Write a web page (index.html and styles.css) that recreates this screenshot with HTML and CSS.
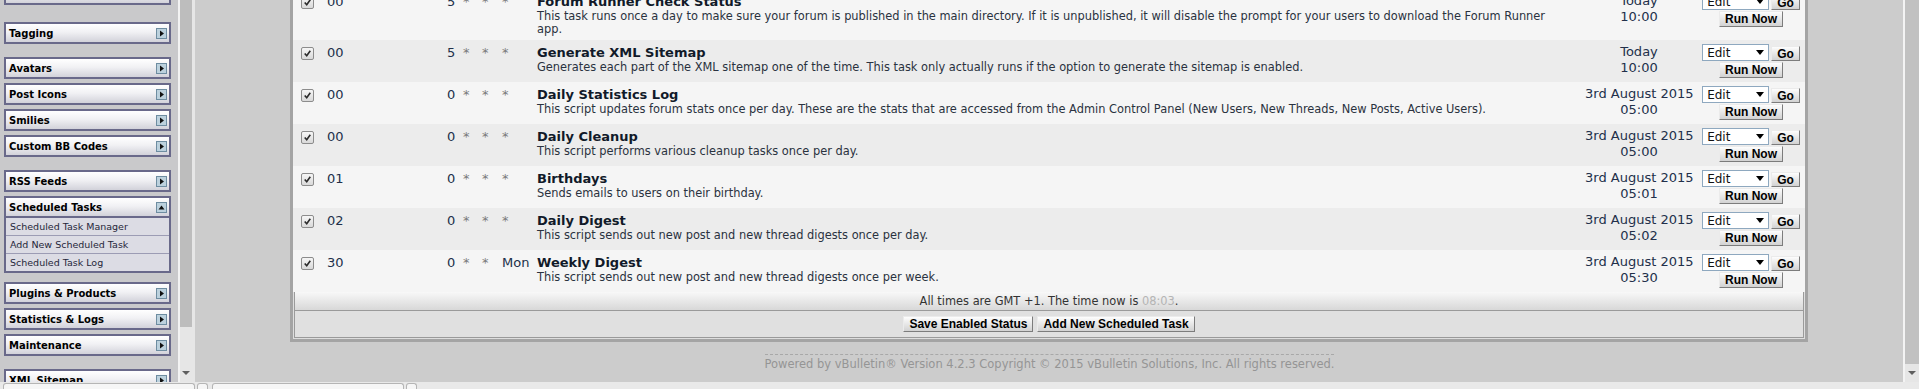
FILE: index.html
```html
<!DOCTYPE html>
<html lang="en">

<head>
    <meta charset="UTF-8">
    <meta name="viewport" content="width=device-width, initial-scale=1.0">
    <title>Scheduled Task Manager</title>
    <link rel="stylesheet" href="styles.css">
</head>

<body>
    <div class="screen">
        <div class="frames">
            <!-- menu da esquerda -->
            <aside class="side">
                <div class="navgroup navgroup--top">
                    <div class="navbox">
                        <div class="navhead">Paid Subscriptions
                            <svg class="tog" viewBox="0 0 11 11"><rect x="0.5" y="0.5" width="10" height="10" /><polygon points="4,2.5 8,5.5 4,8.5" /></svg>
                        </div>
                    </div>
                </div>
                <div class="navgroup">
                    <div class="navbox">
                        <div class="navhead">Tagging
                            <svg class="tog" viewBox="0 0 11 11"><rect x="0.5" y="0.5" width="10" height="10" /><polygon points="4,2.5 8,5.5 4,8.5" /></svg>
                        </div>
                    </div>
                </div>
                <div class="navgroup">
                    <div class="navbox">
                        <div class="navhead">Avatars
                            <svg class="tog" viewBox="0 0 11 11"><rect x="0.5" y="0.5" width="10" height="10" /><polygon points="4,2.5 8,5.5 4,8.5" /></svg>
                        </div>
                    </div>
                    <div class="navbox">
                        <div class="navhead">Post Icons
                            <svg class="tog" viewBox="0 0 11 11"><rect x="0.5" y="0.5" width="10" height="10" /><polygon points="4,2.5 8,5.5 4,8.5" /></svg>
                        </div>
                    </div>
                    <div class="navbox">
                        <div class="navhead">Smilies
                            <svg class="tog" viewBox="0 0 11 11"><rect x="0.5" y="0.5" width="10" height="10" /><polygon points="4,2.5 8,5.5 4,8.5" /></svg>
                        </div>
                    </div>
                    <div class="navbox">
                        <div class="navhead">Custom BB Codes
                            <svg class="tog" viewBox="0 0 11 11"><rect x="0.5" y="0.5" width="10" height="10" /><polygon points="4,2.5 8,5.5 4,8.5" /></svg>
                        </div>
                    </div>
                </div>
                <div class="navgroup navgroup--tight">
                    <div class="navbox">
                        <div class="navhead">RSS Feeds
                            <svg class="tog" viewBox="0 0 11 11"><rect x="0.5" y="0.5" width="10" height="10" /><polygon points="4,2.5 8,5.5 4,8.5" /></svg>
                        </div>
                    </div>
                    <div class="navbox">
                        <div class="navhead navhead--open">Scheduled Tasks
                            <svg class="tog" viewBox="0 0 11 11"><rect x="0.5" y="0.5" width="10" height="10" /><polygon points="2.5,7.5 5.5,3.5 8.5,7.5" /></svg>
                        </div>
                        <a class="navlink" href="#">Scheduled Task Manager</a>
                        <a class="navlink" href="#">Add New Scheduled Task</a>
                        <a class="navlink" href="#">Scheduled Task Log</a>
                    </div>
                </div>
                <div class="navgroup">
                    <div class="navbox">
                        <div class="navhead">Plugins &amp; Products
                            <svg class="tog" viewBox="0 0 11 11"><rect x="0.5" y="0.5" width="10" height="10" /><polygon points="4,2.5 8,5.5 4,8.5" /></svg>
                        </div>
                    </div>
                    <div class="navbox">
                        <div class="navhead">Statistics &amp; Logs
                            <svg class="tog" viewBox="0 0 11 11"><rect x="0.5" y="0.5" width="10" height="10" /><polygon points="4,2.5 8,5.5 4,8.5" /></svg>
                        </div>
                    </div>
                    <div class="navbox">
                        <div class="navhead">Maintenance
                            <svg class="tog" viewBox="0 0 11 11"><rect x="0.5" y="0.5" width="10" height="10" /><polygon points="4,2.5 8,5.5 4,8.5" /></svg>
                        </div>
                    </div>
                </div>
                <div class="navgroup">
                    <div class="navbox">
                        <div class="navhead">XML Sitemap
                            <svg class="tog" viewBox="0 0 11 11"><rect x="0.5" y="0.5" width="10" height="10" /><polygon points="4,2.5 8,5.5 4,8.5" /></svg>
                        </div>
                    </div>
                </div>
            </aside>
            <div class="vscroll vscroll--side">
                <div class="thumb"></div>
                <div class="track"><span class="arrow"></span></div>
            </div>

            <!-- area principal -->
            <main class="main">
                <div class="tborder">
                    <table class="tasks">
                        <colgroup>
                            <col style="width:29px">
                            <col style="width:121px">
                            <col style="width:16px">
                            <col style="width:19px">
                            <col style="width:20px">
                            <col style="width:35px">
                            <col>
                            <col style="width:116px">
                            <col style="width:108px">
                        </colgroup>
                        <tr class="row">
                            <td class="c-chk"><span class="chk"><svg viewBox="0 0 13 13"><path d="M3.2 6.4l2.4 2.8 4.2-6" /></svg></span></td>
                            <td class="c-min">00</td>
                            <td class="c-num">5</td>
                            <td class="c-num star">*</td>
                            <td class="c-num star">*</td>
                            <td class="c-num star">*</td>
                            <td class="c-task">
                                <div class="title">Forum Runner Check Status</div>
                                <div class="desc">This task runs once a day to make sure your forum is published in the main directory. If it is unpublished, it will disable the prompt for your users to download the Forum Runner app.</div>
                            </td>
                            <td class="c-next">Today<br>10:00</td>
                            <td class="c-ctl">
                                <div class="ctl-top">
                                    <span class="pick"><select><option>Edit</option></select></span>
                                    <button class="btn btn--go">Go</button>
                                </div>
                                <button class="btn btn--run">Run Now</button>
                            </td>
                        </tr>
                        <tr class="row row--alt">
                            <td class="c-chk"><span class="chk"><svg viewBox="0 0 13 13"><path d="M3.2 6.4l2.4 2.8 4.2-6" /></svg></span></td>
                            <td class="c-min">00</td>
                            <td class="c-num">5</td>
                            <td class="c-num star">*</td>
                            <td class="c-num star">*</td>
                            <td class="c-num star">*</td>
                            <td class="c-task">
                                <div class="title">Generate XML Sitemap</div>
                                <div class="desc">Generates each part of the XML sitemap one of the time. This task only actually runs if the option to generate the sitemap is enabled.</div>
                            </td>
                            <td class="c-next">Today<br>10:00</td>
                            <td class="c-ctl">
                                <div class="ctl-top">
                                    <span class="pick"><select><option>Edit</option></select></span>
                                    <button class="btn btn--go">Go</button>
                                </div>
                                <button class="btn btn--run">Run Now</button>
                            </td>
                        </tr>
                        <tr class="row">
                            <td class="c-chk"><span class="chk"><svg viewBox="0 0 13 13"><path d="M3.2 6.4l2.4 2.8 4.2-6" /></svg></span></td>
                            <td class="c-min">00</td>
                            <td class="c-num">0</td>
                            <td class="c-num star">*</td>
                            <td class="c-num star">*</td>
                            <td class="c-num star">*</td>
                            <td class="c-task">
                                <div class="title">Daily Statistics Log</div>
                                <div class="desc">This script updates forum stats once per day. These are the stats that are accessed from the Admin Control Panel (New Users, New Threads, New Posts, Active Users).</div>
                            </td>
                            <td class="c-next">3rd August 2015<br>05:00</td>
                            <td class="c-ctl">
                                <div class="ctl-top">
                                    <span class="pick"><select><option>Edit</option></select></span>
                                    <button class="btn btn--go">Go</button>
                                </div>
                                <button class="btn btn--run">Run Now</button>
                            </td>
                        </tr>
                        <tr class="row row--alt">
                            <td class="c-chk"><span class="chk"><svg viewBox="0 0 13 13"><path d="M3.2 6.4l2.4 2.8 4.2-6" /></svg></span></td>
                            <td class="c-min">00</td>
                            <td class="c-num">0</td>
                            <td class="c-num star">*</td>
                            <td class="c-num star">*</td>
                            <td class="c-num star">*</td>
                            <td class="c-task">
                                <div class="title">Daily Cleanup</div>
                                <div class="desc">This script performs various cleanup tasks once per day.</div>
                            </td>
                            <td class="c-next">3rd August 2015<br>05:00</td>
                            <td class="c-ctl">
                                <div class="ctl-top">
                                    <span class="pick"><select><option>Edit</option></select></span>
                                    <button class="btn btn--go">Go</button>
                                </div>
                                <button class="btn btn--run">Run Now</button>
                            </td>
                        </tr>
                        <tr class="row">
                            <td class="c-chk"><span class="chk"><svg viewBox="0 0 13 13"><path d="M3.2 6.4l2.4 2.8 4.2-6" /></svg></span></td>
                            <td class="c-min">01</td>
                            <td class="c-num">0</td>
                            <td class="c-num star">*</td>
                            <td class="c-num star">*</td>
                            <td class="c-num star">*</td>
                            <td class="c-task">
                                <div class="title">Birthdays</div>
                                <div class="desc">Sends emails to users on their birthday.</div>
                            </td>
                            <td class="c-next">3rd August 2015<br>05:01</td>
                            <td class="c-ctl">
                                <div class="ctl-top">
                                    <span class="pick"><select><option>Edit</option></select></span>
                                    <button class="btn btn--go">Go</button>
                                </div>
                                <button class="btn btn--run">Run Now</button>
                            </td>
                        </tr>
                        <tr class="row row--alt">
                            <td class="c-chk"><span class="chk"><svg viewBox="0 0 13 13"><path d="M3.2 6.4l2.4 2.8 4.2-6" /></svg></span></td>
                            <td class="c-min">02</td>
                            <td class="c-num">0</td>
                            <td class="c-num star">*</td>
                            <td class="c-num star">*</td>
                            <td class="c-num star">*</td>
                            <td class="c-task">
                                <div class="title">Daily Digest</div>
                                <div class="desc">This script sends out new post and new thread digests once per day.</div>
                            </td>
                            <td class="c-next">3rd August 2015<br>05:02</td>
                            <td class="c-ctl">
                                <div class="ctl-top">
                                    <span class="pick"><select><option>Edit</option></select></span>
                                    <button class="btn btn--go">Go</button>
                                </div>
                                <button class="btn btn--run">Run Now</button>
                            </td>
                        </tr>
                        <tr class="row">
                            <td class="c-chk"><span class="chk"><svg viewBox="0 0 13 13"><path d="M3.2 6.4l2.4 2.8 4.2-6" /></svg></span></td>
                            <td class="c-min">30</td>
                            <td class="c-num">0</td>
                            <td class="c-num star">*</td>
                            <td class="c-num star">*</td>
                            <td class="c-num">Mon</td>
                            <td class="c-task">
                                <div class="title">Weekly Digest</div>
                                <div class="desc">This script sends out new post and new thread digests once per week.</div>
                            </td>
                            <td class="c-next">3rd August 2015<br>05:30</td>
                            <td class="c-ctl">
                                <div class="ctl-top">
                                    <span class="pick"><select><option>Edit</option></select></span>
                                    <button class="btn btn--go">Go</button>
                                </div>
                                <button class="btn btn--run">Run Now</button>
                            </td>
                        </tr>
                    </table>
                    <div class="tfoot">
                        <div class="tfoot-time">All times are GMT +1. The time now is <span class="now">08:03</span>.</div>
                        <div class="tfoot-btns">
                            <button class="btn">Save Enabled Status</button>
                            <button class="btn">Add New Scheduled Task</button>
                        </div>
                    </div>
                </div>
                <div class="copyright">Powered by vBulletin&reg; Version 4.2.3 Copyright &copy; 2015 vBulletin Solutions, Inc. All rights reserved.</div>
            </main>
            <div class="vscroll vscroll--main">
                <div class="thumb"></div>
                <div class="track"><span class="arrow"></span></div>
            </div>
        </div>
        <div class="hbar">
            <span class="tab tab--wide"></span>
            <span class="tab tab--small"></span>
            <span class="tab tab--wide tab--next"></span>
            <span class="tab tab--small"></span>
        </div>
    </div>
</body>

</html>
```

FILE: styles.css
```css
body {
    margin: 0;
    font-family: "DejaVu Sans", Verdana, sans-serif;
    background: #cccccc;
    overflow: hidden;
}

.screen {
    height: 389px;
    display: flex;
    flex-direction: column;
}

.frames {
    display: flex;
    height: 382px;
    overflow: hidden;
}

/* menu da esquerda */
.side {
    width: 178px;
    flex: none;
    box-sizing: border-box;
    padding-left: 4px;
    background: #c9c9cb;
    overflow: hidden;
}

.navgroup {
    display: flow-root;
    margin-bottom: 9px;
}

.navgroup--top {
    margin-top: -17px;
    margin-bottom: 13px;
}

.navgroup--tight {
    margin-bottom: 5px;
}

.navbox {
    width: 167px;
    box-sizing: border-box;
    border: 2px solid #69698a;
    margin-bottom: 4px;
    background: #dcdce4;
}

.navhead {
    display: flex;
    align-items: center;
    justify-content: space-between;
    height: 18px;
    padding: 0 2px 0 3px;
    font-size: 10px;
    font-weight: bold;
    color: #000;
    background: linear-gradient(#ffffff, #f1f1f4 45%, #d2d2da);
}

.navhead--open {
    border-bottom: 2px solid #69698a;
}

.tog {
    width: 11px;
    height: 11px;
    flex: none;
}

.tog rect {
    fill: #bcd1dd;
    stroke: #6e8da1;
}

.tog polygon {
    fill: #111;
}

.navlink {
    display: block;
    height: 17px;
    line-height: 17px;
    padding-left: 4px;
    font-size: 9.5px;
    color: #26263a;
    text-decoration: none;
}

.navlink + .navlink {
    border-top: 1px solid #9c9cb4;
}

/* barras de rolagem */
.vscroll {
    flex: none;
    display: flex;
    flex-direction: column;
    background: #e6e6e6;
    border-left: 2px solid #f3f3f3;
}

.vscroll--side {
    width: 15px;
}

.vscroll--side .thumb {
    height: 327px;
    width: 12px;
    background: #bdbdbd;
}

.vscroll--main {
    width: 14px;
}

.vscroll--main .thumb {
    height: 364px;
    background: #c1c1c1;
}

.track {
    flex: 1;
    display: flex;
    align-items: flex-end;
    justify-content: center;
    padding-bottom: 7px;
}

.arrow {
    width: 0;
    height: 0;
    border-left: 4px solid transparent;
    border-right: 4px solid transparent;
    border-top: 4px solid #5f5f5f;
}

.vscroll--side .arrow {
    margin-right: 3px;
}

/* area principal */
.main {
    flex: 1;
    background: #cccccc;
    overflow: hidden;
}

.tborder {
    width: 1518px;
    box-sizing: border-box;
    margin: -14px auto 0;
    border: 3px solid #a4a4a4;
    background: #dedede;
}

.tasks {
    width: 100%;
    border-collapse: collapse;
    table-layout: fixed;
    color: #22304a;
}

.tasks td {
    vertical-align: top;
    padding: 4px;
}

.row {
    background: #f5f5f5;
}

.row--alt {
    background: #ececec;
}

.c-chk {
    text-align: center;
}

.chk {
    display: inline-block;
    width: 13px;
    height: 13px;
    margin-top: 3px;
    box-sizing: border-box;
    border: 1px solid #8c8c8c;
    border-radius: 2px;
    background: linear-gradient(#f6f6f6, #d9d9d9);
}

.chk svg {
    display: block;
    width: 11px;
    height: 11px;
    fill: none;
    stroke: #2b2b2b;
    stroke-width: 1.9;
}

.c-min,
.c-num {
    font-size: 13px;
    line-height: 17px;
    white-space: nowrap;
}

.tasks .c-min {
    padding-left: 5px;
}

.star {
    color: #7a7a7a;
}

.tasks .c-task {
    padding-right: 20px;
}

.title {
    font-size: 13px;
    line-height: 17px;
    font-weight: bold;
    color: #111a29;
}

.desc {
    font-size: 11.4px;
    line-height: 13px;
    color: #2a3240;
}

.c-next {
    text-align: center;
    font-size: 13px;
    line-height: 16px;
    white-space: nowrap;
}

.tasks .c-ctl {
    padding: 4px 0;
}

.ctl-top {
    display: flex;
    justify-content: center;
    align-items: flex-end;
    gap: 2px;
    margin-bottom: 1px;
}

.pick {
    position: relative;
    display: block;
}

.pick select {
    appearance: none;
    display: block;
    width: 67px;
    height: 17px;
    box-sizing: border-box;
    margin: 0;
    padding: 0 0 0 4px;
    border: 1px solid #8ea8bf;
    border-radius: 0;
    background: #fff;
    font-family: "DejaVu Sans", Verdana, sans-serif;
    font-size: 12px;
    color: #111;
}

.pick::after {
    content: "";
    position: absolute;
    right: 5px;
    top: 6px;
    border-left: 4px solid transparent;
    border-right: 4px solid transparent;
    border-top: 5px solid #000;
}

.btn {
    height: 16px;
    box-sizing: border-box;
    margin: 0;
    padding: 0 5px;
    border: 1px solid;
    border-color: #ebebeb #7c7c7c #7c7c7c #ebebeb;
    border-radius: 0;
    background: linear-gradient(#fdfdfd, #d2d2d2);
    font-family: "Liberation Sans", Arial, sans-serif;
    font-size: 12px;
    font-weight: bold;
    line-height: 14px;
    color: #000;
}

.btn--go {
    height: 15px;
}

.btn--run {
    display: block;
    margin: 0 auto;
}

.tfoot {
    margin: 0 1px 1px;
    font-size: 11.4px;
    color: #333;
    text-align: center;
}

.tfoot-time {
    height: 18px;
    line-height: 18px;
    border: 1px solid #9a9a9a;
    border-top: none;
    background: linear-gradient(#f8f8f8, #d8d8d8);
}

.now {
    color: #b4b4b4;
}

.tfoot-btns {
    display: flex;
    justify-content: center;
    align-items: center;
    gap: 4px;
    height: 26px;
    border: 1px solid #9a9a9a;
    border-top: none;
    background: #e0e0e0;
}

.copyright {
    width: 569px;
    margin: 12px auto 0;
    padding-top: 2px;
    border-top: 1px dashed #a8a8a8;
    font-size: 11.5px;
    line-height: 14px;
    color: #959595;
    text-align: center;
    white-space: nowrap;
}

/* barra de baixo */
.hbar {
    flex: 1;
    display: flex;
    align-items: flex-end;
    padding-left: 3px;
    background: #e9e9e9;
}

.tab {
    height: 6px;
    box-sizing: border-box;
    margin-right: 2px;
    border: 1px solid #b5b5b5;
    border-bottom: none;
    border-radius: 3px 3px 0 0;
    background: #f6f6f6;
}

.tab--wide {
    width: 192px;
}

.tab--small {
    width: 11px;
}

.tab--next {
    margin-left: 2px;
}
```
